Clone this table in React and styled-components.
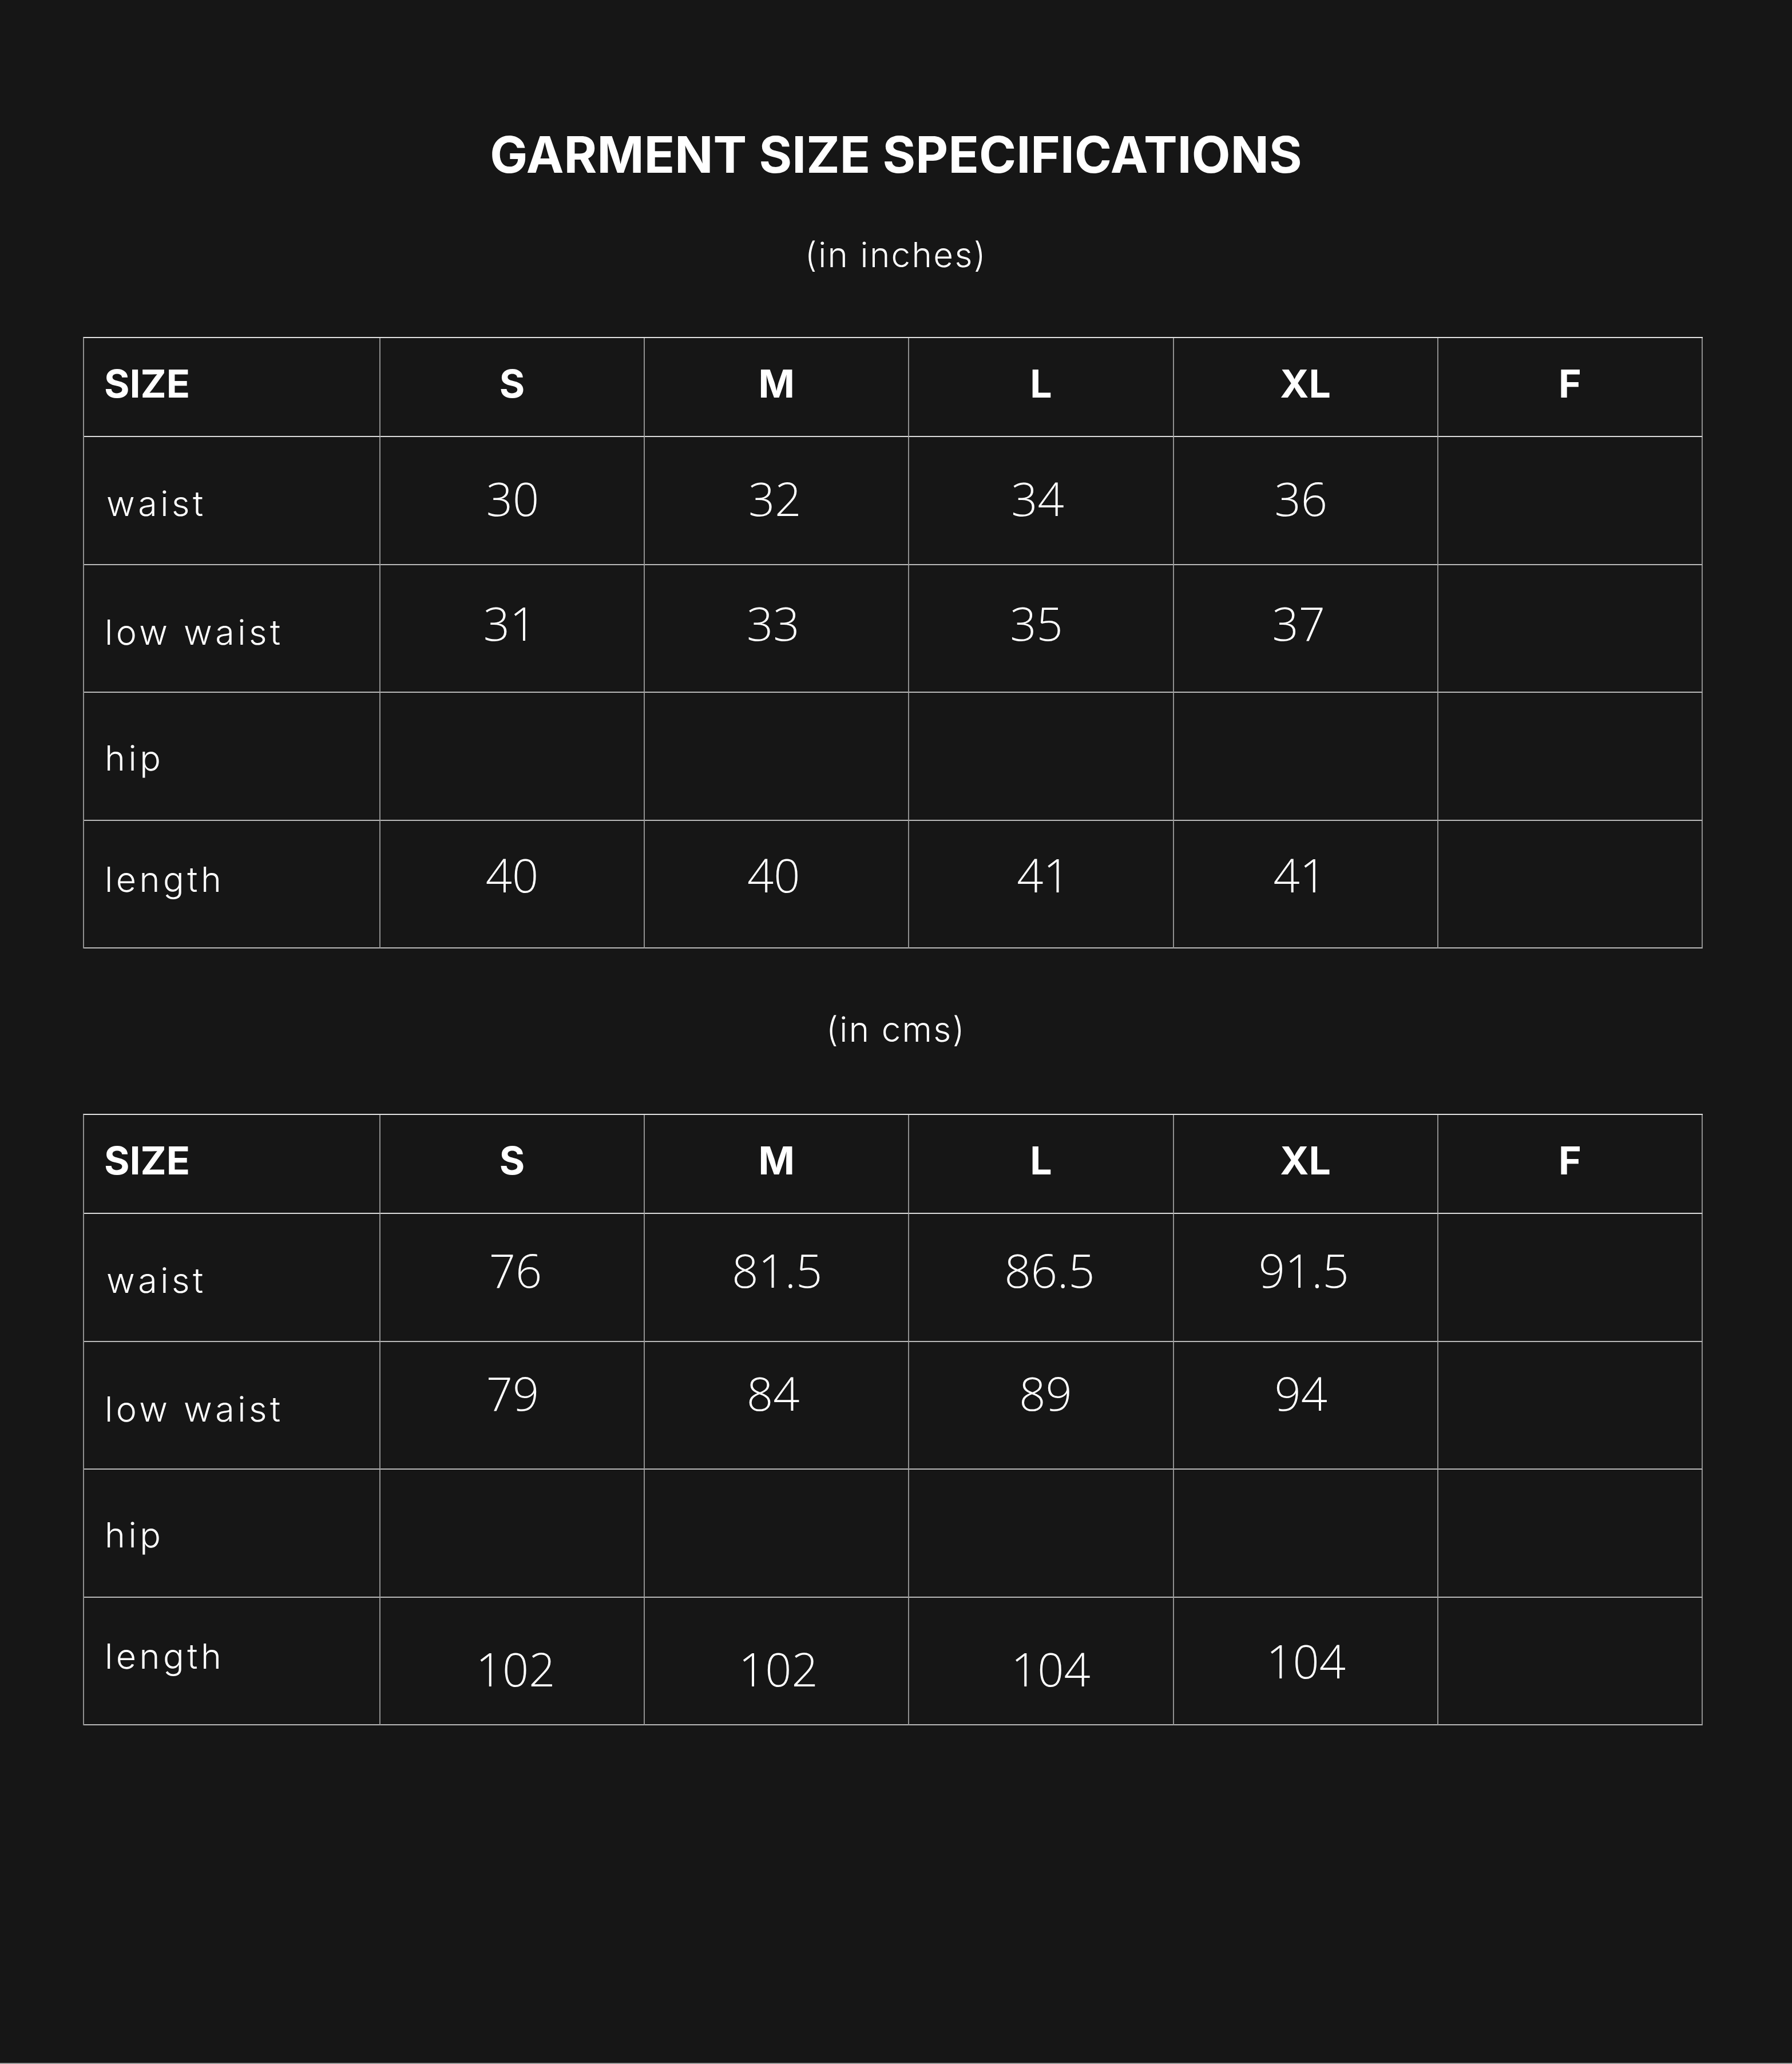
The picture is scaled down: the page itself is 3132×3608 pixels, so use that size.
import React from "react";
import styled, { createGlobalStyle } from "styled-components";

const Global = createGlobalStyle`
  html, body { margin: 0; padding: 0; background: #161616; }
  body { font-family: "Inter", "Liberation Sans", sans-serif; color: #fff; }
`;

const Page = styled.div`
  box-sizing: border-box;
  min-height: 3608px;
  background: #161616;
  border-bottom: 2px solid #9a9a9a;
  display: flex;
  flex-direction: column;
  padding-top: 226px;
`;

const Title = styled.h1`
  margin: 0;
  text-align: center;
  font-family: "Inter", "Liberation Sans", sans-serif;
  font-weight: 700;
  font-size: 88px;
  line-height: 1;
  letter-spacing: 0.002em;
  color: #fff;
`;

const Caption = styled.p`
  margin: ${(p) => p.$top}px 0 0;
  text-align: center;
  font-family: "Inter", "Liberation Sans", sans-serif;
  font-weight: 300;
  font-size: 60px;
  line-height: 1;
  letter-spacing: 0.04em;
  color: #fff;
`;

const Grid = styled.div`
  box-sizing: border-box;
  margin: ${(p) => p.$top}px 0 0 145px;
  width: 2831px;
  display: grid;
  grid-template-columns: 518px repeat(5, 1fr);
  border-top: 2px solid #e2e2e2;
  border-left: 2px solid #8f8f8f;
`;

const Cell = styled.div`
  box-sizing: border-box;
  height: ${(p) => (p.$head ? 173 : 223.5)}px;
  border-right: 2px solid #8f8f8f;
  border-bottom: 2px solid ${(p) => (p.$head ? "#dcdcdc" : "#b9b9b9")};
  overflow: hidden;
`;

const HeadLabel = styled(Cell)`
  padding: 45px 0 0 35px;
  font-family: "Inter", "Liberation Sans", sans-serif;
  font-weight: 700;
  font-size: 68px;
  line-height: 1;
  color: #fff;
`;

const HeadSize = styled(HeadLabel)`
  padding-left: 0;
  text-align: center;
`;

const RowLabel = styled(Cell)`
  padding: ${(p) => p.$top}px 0 0 ${(p) => 36 + (p.$dx || 0)}px;
  font-family: "Inter", "Liberation Sans", sans-serif;
  font-weight: 300;
  font-size: 61px;
  line-height: 1;
  letter-spacing: 0.09em;
  color: #fff;
`;

const Value = styled(Cell)`
  padding-top: ${(p) => p.$top}px;
  padding-left: ${(p) => Math.max(0, 2 * (p.$dx || 0))}px;
  padding-right: ${(p) => Math.max(0, -2 * (p.$dx || 0))}px;
  text-align: center;
  font-family: "Open Sans", "Liberation Sans", sans-serif;
  font-weight: 300;
  font-size: 81px;
  line-height: 1;
  color: #fff;
`;

const SIZES = ["S", "M", "L", "XL", "F"];

const inches = [
  { label: "waist", labelTop: 86, labelDx: 3, top: 66, values: [["30", 1], ["32", -3], ["34", -6], ["36", -8]] },
  { label: "low waist", labelTop: 87, top: 60, values: [["31", -4], ["33", -6], ["35", -8], ["37", -12]] },
  { label: "hip", labelTop: 84, top: 60, values: [] },
  { label: "length", labelTop: 72, top: 53, values: [["40", 0], ["40", -5], ["41", 4], ["41", -10]] },
];

const cms = [
  { label: "waist", labelTop: 86, labelDx: 3, top: 57, values: [["76", 6], ["81.5", 1], ["86.5", 15], ["91.5", -3]] },
  { label: "low waist", labelTop: 87, top: 48, values: [["79", 1], ["84", -6], ["89", 8], ["94", -8]] },
  { label: "hip", labelTop: 84, top: 60, values: [] },
  { label: "length", labelTop: 72, top: 83, values: [["102", 6], ["102", 3], ["104", 17], ["104", 1, 69]] },
];

function SizeTable({ rows, top }) {
  return (
    <Grid $top={top}>
      <HeadLabel $head>SIZE</HeadLabel>
      {SIZES.map((s) => (
        <HeadSize $head key={s}>{s}</HeadSize>
      ))}
      {rows.map((r) => (
        <React.Fragment key={r.label}>
          <RowLabel $top={r.labelTop} $dx={r.labelDx}>{r.label}</RowLabel>
          {SIZES.map((s, i) => {
            const v = r.values[i];
            return (
              <Value key={s} $top={v && v[2] ? v[2] : r.top} $dx={v ? v[1] : 0}>
                {v ? v[0] : ""}
              </Value>
            );
          })}
        </React.Fragment>
      ))}
    </Grid>
  );
}

export default function App() {
  return (
    <>
      <Global />
      <Page>
        <Title>GARMENT SIZE SPECIFICATIONS</Title>
        <Caption $top={101}>(in inches)</Caption>
        <SizeTable rows={inches} top={114} />
        <Caption $top={111}>(in cms)</Caption>
        <SizeTable rows={cms} top={118} />
      </Page>
    </>
  );
}
